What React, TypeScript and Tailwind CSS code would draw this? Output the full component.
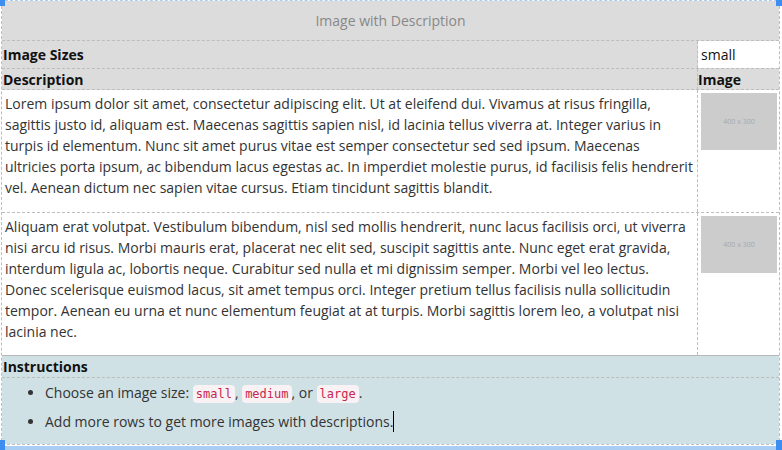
import React from "react";

const P1 = [
  "Lorem ipsum dolor sit amet, consectetur adipiscing elit. Ut at eleifend dui. Vivamus at risus fringilla,",
  "sagittis justo id, aliquam est. Maecenas sagittis sapien nisl, id lacinia tellus viverra at. Integer varius in",
  "turpis id elementum. Nunc sit amet purus vitae est semper consectetur sed sed ipsum. Maecenas",
  "ultricies porta ipsum, ac bibendum lacus egestas ac. In imperdiet molestie purus, id facilisis felis hendrerit",
  "vel. Aenean dictum nec sapien vitae cursus. Etiam tincidunt sagittis blandit.",
];
const P2 = [
  "Aliquam erat volutpat. Vestibulum bibendum, nisl sed mollis hendrerit, nunc lacus facilisis orci, ut viverra",
  "nisi arcu id risus. Morbi mauris erat, placerat nec elit sed, suscipit sagittis ante. Nunc eget erat gravida,",
  "interdum ligula ac, lobortis neque. Curabitur sed nulla et mi dignissim semper. Morbi vel leo lectus.",
  "Donec scelerisque euismod lacus, sit amet tempus orci. Integer pretium tellus facilisis nulla sollicitudin",
  "tempor. Aenean eu urna et nunc elementum feugiat at at turpis. Morbi sagittis lorem leo, a volutpat nisi",
  "lacinia nec.",
];

function Placeholder() {
  return (
    <div className="w-[76px] h-[57px] bg-[#cccccc] flex items-center justify-center">
      <span className="text-[7px] leading-none text-[#a8a8a8] font-['Open_Sans',sans-serif]">
        400 x 300
      </span>
    </div>
  );
}

function Code({ children }: { children: React.ReactNode }) {
  return (
    <code className="font-['DejaVu_Sans_Mono',monospace] text-[12px] text-[#c7254e] bg-[#f9f2f4] px-[3px] py-[2px] rounded-[4px]">
      {children}
    </code>
  );
}

function BodyRow({ lines, pb }: { lines: string[]; pb: string }) {
  return (
    <div className="grid grid-cols-[696px_1fr] border-b border-dashed border-[#bdbdbd] bg-white">
      <div className={`border-r border-dashed border-[#bdbdbd] pl-[3px] pr-[2px] pt-[3px] ${pb}`}>
        <p className="text-[14px] leading-[21px] text-[#333]">
          {lines.map((l, i) => (
            <span key={i} className="block whitespace-nowrap">
              {l}
            </span>
          ))}
        </p>
      </div>
      <div className="pl-[3px] pt-[3px]">
        <Placeholder />
      </div>
    </div>
  );
}

export default function App() {
  return (
    <div className="w-[782px] h-[450px] relative overflow-hidden bg-white font-['Open_Sans',sans-serif]">
      <div className="flex flex-col h-full">
        <div className="h-[1px] border-t border-dashed border-[#a9cdf3]" />
        <div className="ml-[1px] w-[779px] flex-1 flex flex-col border-x border-dashed border-[#bdbdbd]">
          {/* Title */}
          <div className="h-[40px] bg-[#dcdcdc] border-b border-dashed border-[#bdbdbd] flex items-center justify-center">
            <span className="text-[14px] text-[#888]">Image with Description</span>
          </div>
          {/* Image sizes */}
          <div className="h-[28px] grid grid-cols-[696px_1fr] bg-[#dcdcdc] border-b border-dashed border-[#bdbdbd]">
            <div className="border-r border-dashed border-[#bdbdbd] flex items-center pl-[1px]">
              <span className="text-[14px] font-bold text-[#111]">Image Sizes</span>
            </div>
            <div className="bg-white flex items-center pl-[3px]">
              <span className="text-[14px] text-[#111]">small</span>
            </div>
          </div>
          {/* Header */}
          <div className="h-[21px] grid grid-cols-[696px_1fr] bg-[#dcdcdc] border-b border-dashed border-[#bdbdbd]">
            <div className="border-r border-dashed border-[#bdbdbd] flex items-center pl-[1px]">
              <span className="text-[14px] font-bold text-[#111]">Description</span>
            </div>
            <div className="flex items-center">
              <span className="text-[14px] font-bold text-[#111]">Image</span>
            </div>
          </div>
          <BodyRow lines={P1} pb="pb-[14px]" />
          <BodyRow lines={P2} pb="pb-[13px]" />
          {/* Instructions */}
          <div className="flex-1 bg-[#cfe1e5] border-t border-[#b8b8b8] -mt-[1px] flex flex-col">
            <div className="h-[22px] flex items-center pl-[1px] border-b border-dashed border-[#bdbdbd]">
              <span className="text-[14px] font-bold text-[#111]">Instructions</span>
            </div>
            <ul className="list-disc pl-[43px] pt-[4px] text-[14px] leading-[21px] text-[#333]">
              <li className="mb-[6px]">
                Choose an image size: <Code>small</Code>, <Code>medium</Code>, or <Code>large</Code>.
              </li>
              <li>
                Add more rows to get more images with descriptions.
                <span className="inline-block w-[1px] h-[21px] bg-black align-top" />
              </li>
            </ul>
          </div>
          <div className="border-b border-dashed border-[#bdbdbd] mb-[1px]" />
        </div>
        <div className="h-[4px] bg-[#a9cdf3]" />
      </div>
      {/* selection handles */}
      <div className="absolute left-0 top-0 w-[5px] h-[6px] bg-[#3d8ef0]" />
      <div className="absolute right-0 top-0 w-[6px] h-[6px] bg-[#3d8ef0]" />
      <div className="absolute left-0 bottom-0 w-[5px] h-[10px] bg-[#3d8ef0]" />
      <div className="absolute right-0 bottom-0 w-[6px] h-[10px] bg-[#3d8ef0]" />
    </div>
  );
}
